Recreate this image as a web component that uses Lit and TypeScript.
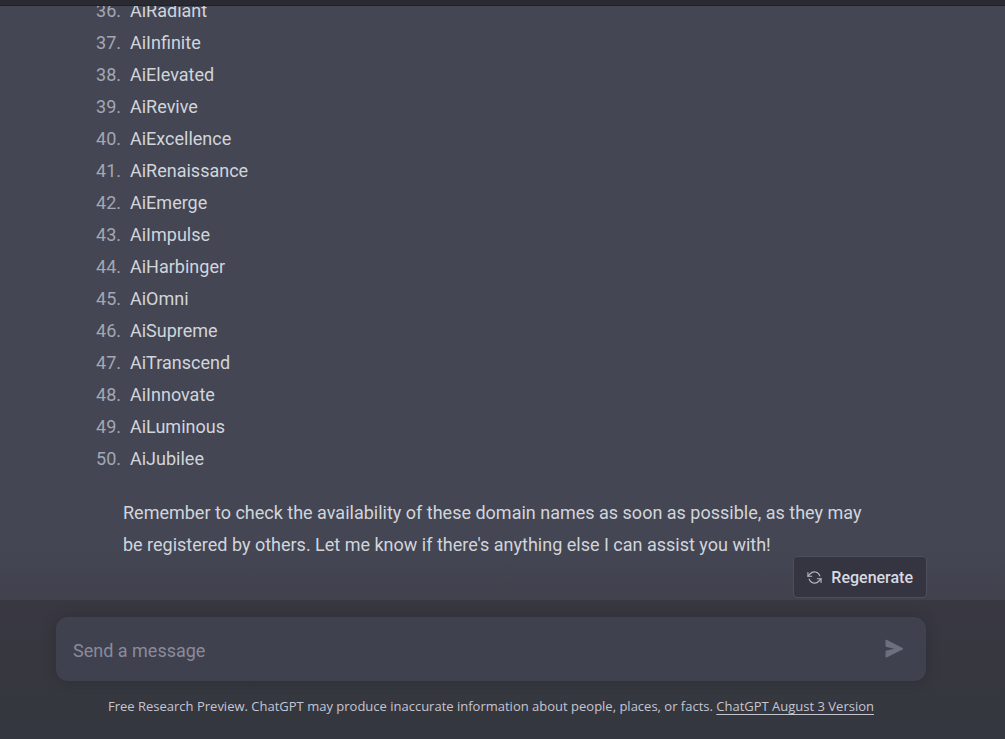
import { LitElement, html, css } from "lit";
import { customElement, property, state } from "lit/decorators.js";

@customElement("chat-message")
class ChatMessage extends LitElement {
  @property({ type: Array }) names: string[] = [];
  @property({ type: Number }) start = 1;

  static styles = css`
    :host {
      display: block;
      padding: 0 128px 39px 123px;
      font-size: 18px;
      line-height: 32px;
      color: #d1d5db;
    }
    .names {
      margin: 0 0 22px;
      padding: 0;
      list-style: none;
    }
    .name {
      display: grid;
      grid-template-columns: 26px 1fr;
      column-gap: 9px;
      margin-left: -28px;
    }
    .number {
      text-align: right;
      color: #a3a6b3;
    }
    .closing {
      margin: 0;
    }
  `;

  render() {
    return html`
      <ol class="names" start=${this.start}>
        ${this.names.map(
          (name, i) => html`<li class="name"><span class="number">${this.start + i}.</span><span>${name}</span></li>`
        )}
      </ol>
      <p class="closing">
        Remember to check the availability of these domain names as soon as possible, as they may
        be registered by others. Let me know if there's anything else I can assist you with!
      </p>
    `;
  }
}

@customElement("chat-composer")
class ChatComposer extends LitElement {
  @state() private draft = "";

  static styles = css`
    :host {
      display: block;
      position: relative;
      padding: 17px 79px 23px 56px;
      background: linear-gradient(#393842, #36373f 50%, #353740);
    }
    .regenerate {
      position: absolute;
      right: 78px;
      bottom: calc(100% + 2px);
      display: flex;
      align-items: center;
      gap: 9px;
      height: 42px;
      padding: 0 13px;
      border: 1px solid #4e4f5d;
      border-radius: 4px;
      background: #343541;
      color: #d9d9e3;
      font: 500 16px "Roboto", sans-serif;
    }
    .regenerate svg {
      color: #b4b5c0;
    }
    .box {
      display: flex;
      align-items: center;
      height: 64px;
      padding: 0 18px 0 17px;
      box-sizing: border-box;
      border-radius: 12px;
      background: #40414f;
      box-shadow: 0 0 15px rgba(0, 0, 0, 0.16);
    }
    .field {
      flex: 1;
      min-width: 0;
      padding: 2px 0 0;
      border: 0;
      outline: 0;
      background: none;
      color: #fff;
      font: 18px "Roboto", sans-serif;
    }
    .field::placeholder {
      color: #8a8b9a;
      opacity: 1;
    }
    .send {
      display: flex;
      padding: 4px;
      border: 0;
      background: none;
      color: #6d6e7e;
    }
    .note {
      margin: 15px 0 0;
      text-align: center;
      font: 13px/20px "Open Sans", sans-serif;
      color: #c5c5d2;
    }
    .note a {
      color: inherit;
      text-underline-offset: 3px;
    }
  `;

  render() {
    return html`
      <button class="regenerate" type="button">
        <svg width="15" height="15" viewBox="0 0 24 24" fill="none" stroke="currentColor" stroke-width="1.8" stroke-linecap="round" stroke-linejoin="round" aria-hidden="true">
          <path d="M1.500 4v6h6M22.500 20v-6h-6" />
          <path d="M20.500 9.500A9 9 0 0 0 5.200 6L1.500 10M22.500 14l-3.700 4A9 9 0 0 1 3.500 14.500" />
        </svg>
        Regenerate
      </button>
      <form class="box" @submit=${(e: Event) => e.preventDefault()}>
        <input
          class="field"
          aria-label="Send a message"
          placeholder="Send a message"
          .value=${this.draft}
          @input=${(e: InputEvent) => (this.draft = (e.target as HTMLInputElement).value)}
        />
        <button class="send" type="submit" aria-label="Send">
          <svg width="20" height="20" viewBox="0 0 20 20" fill="currentColor" aria-hidden="true">
            <path d="M1.500 1.300C1.500.7 2 .5 2.600.8l16 8.100c.7.4.7 1.100 0 1.500l-16 8.100c-.6.3-1.100 0-1.100-.6v-5.200c0-.6.4-1 1-1.100L10.300 9.700 2.500 7.900c-.6-.1-1-.5-1-1.100Z" />
          </svg>
        </button>
      </form>
      <p class="note">
        Free Research Preview. ChatGPT may produce inaccurate information about people, places, or facts.
        <a href="#release-notes">ChatGPT August 3 Version</a>
      </p>
    `;
  }
}

@customElement("app-root")
class AppRoot extends LitElement {
  private names = [
    "AiRadiant", "AiInfinite", "AiElevated", "AiRevive", "AiExcellence",
    "AiRenaissance", "AiEmerge", "AiImpulse", "AiHarbinger", "AiOmni",
    "AiSupreme", "AiTranscend", "AiInnovate", "AiLuminous", "AiJubilee",
  ];

  static styles = css`
    :host {
      display: flex;
      flex-direction: column;
      height: 100vh;
      background: #444654;
      font-family: "Roboto", sans-serif;
    }
    .top {
      flex: none;
      height: 5px;
      background: #2a2a32;
      border-bottom: 1px solid #202028;
    }
    .thread {
      flex: 1;
      min-height: 0;
      display: flex;
      flex-direction: column;
      justify-content: flex-end;
      overflow: hidden;
      background: linear-gradient(transparent calc(100% - 50px), #41414d) #444654;
    }
    chat-composer {
      flex: none;
    }
  `;

  render() {
    return html`
      <header class="top"></header>
      <main class="thread">
        <chat-message .names=${this.names} .start=${36}></chat-message>
      </main>
      <chat-composer></chat-composer>
    `;
  }
}
